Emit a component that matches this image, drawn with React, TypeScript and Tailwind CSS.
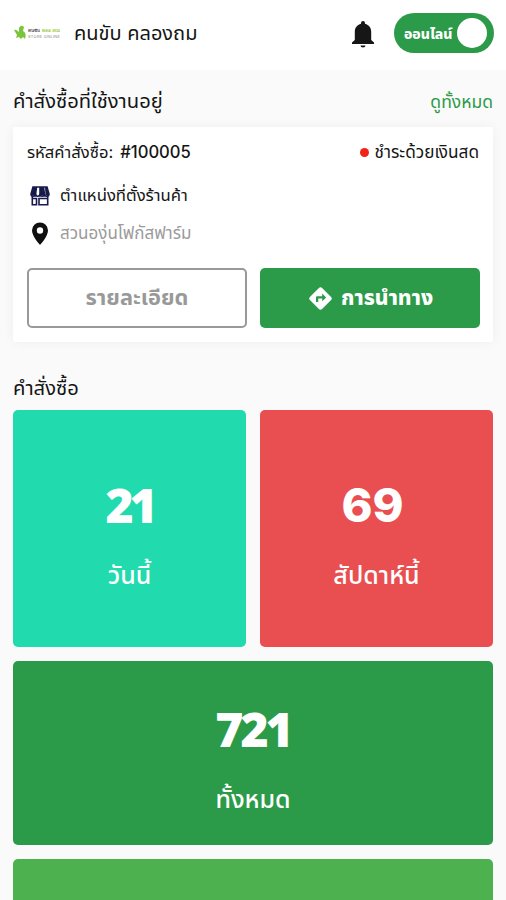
import { MdDirections } from "react-icons/md";

function Logo() {
  return (
    <svg className="h-[18px] w-[50px] shrink-0" viewBox="0 0 50 18">
      <path d="M1 6 Q3 5 6 8 L6 4 Q8 0 11 3 L10 7 Q14 9 12 15 L10 13 L8 15 L6 13 L3 14 L4 11Z" fill="#7cc43c" />
      <text x="15" y="8" fontSize="4.500" fontWeight="700" fontFamily="Noto Sans, sans-serif" fill="#555" textLength="12">คนขับ</text>
      <text x="29" y="8" fontSize="4.500" fontWeight="700" fontFamily="Noto Sans, sans-serif" fill="#9ac83c" textLength="18">คลองถม</text>
      <text x="15" y="14" fontSize="4" fontFamily="Inter, sans-serif" fill="#888" textLength="32">STORE ONLINE</text>
    </svg>
  );
}

function BellIcon() {
  return (
    <svg className="ml-auto mr-[3px] mt-px h-[28px] w-[24px] shrink-0" viewBox="0 0 24 28" fill="#161616">
      <path d="M12 1a2 2 0 0 1 2 2v.8c4 1 6.200 4.200 6.200 8.200v8l2.800 2.600V24H1v-1.400L3.800 20v-8c0-4 2.200-7.200 6.200-8.200V3a2 2 0 0 1 2-2z" />
      <path d="M9.500 25.400h5a2.500 2 0 0 1-5 0z" />
    </svg>
  );
}

function PinIcon() {
  return (
    <svg className="h-[24px] w-[27px] shrink-0" viewBox="0 0 27 24">
      <path fillRule="evenodd" d="M13 .5A8 8 0 0 0 5 8.500C5 14.500 13 23 13 23S21 14.500 21 8.500A8 8 0 0 0 13 .5zM13 5.300a3.200 3.200 0 1 1 0 6.400 3.200 3.200 0 0 1 0-6.400z" fill="#101010" />
    </svg>
  );
}

function StoreIcon() {
  return (
    <svg className="h-5 w-5 shrink-0" viewBox="0 0 20 20" fill="none" stroke="#181a4b" strokeWidth="1.6">
      <path d="M3 1h14l2 7a2.200 2.200 0 0 1-4.500 0 2.200 2.200 0 0 1-4.500 0 2.200 2.200 0 0 1-4.500 0A2.200 2.200 0 0 1 1 8z" />
      <path d="M3 1h3.500L5.500 8v2.200L1 9zM10 1h3.500l1 7-1.500 2-3-1.500zM15 1h2l2 7-1.500 2-2-1z" fill="#181a4b" stroke="none" />
      <path d="M6.500 1 5.500 9M10 1v8M13.500 1l1 8M2.300 10v8.800h4.200V13M17.700 10v8.800H9v-6.300h8.700M2.300 12.500h5" />
    </svg>
  );
}

function Stat({ value, label, box, digits }: { value: string; label: string; box: string; digits: string }) {
  return (
    <div className={`flex flex-col items-center rounded-[5px] text-white ${box}`}>
      <span className={`font-extrabold leading-[56px] ${digits}`}>{value}</span>
      <span className="mt-[19px] text-[25px] font-medium leading-[46px]">{label}</span>
    </div>
  );
}

export default function App() {
  return (
    <div className="h-[900px] w-[506px] overflow-hidden bg-[#fafafa] font-['Inter','Noto_Sans_Thai','Noto_Sans',sans-serif] text-[#151515]">
      <header className="flex h-[70px] items-center bg-white pl-[13px] pr-3 pb-1">
        <Logo />
        <h1 className="ml-[11px] whitespace-nowrap text-[20px]">คนขับ คลองถม</h1>
        <BellIcon />
        <div className="ml-4 flex h-10 w-[100px] items-center justify-between rounded-full bg-[#2b9b49] pl-[10px] pr-[7px]">
          <span className="whitespace-nowrap text-[14px] font-extrabold text-white">ออนไลน์</span>
          <span className="size-[30px] rounded-full bg-white" />
        </div>
      </header>
      <main className="px-[13px]">
        <div className="flex h-[57px] items-center justify-between pt-[5px]">
          <h2 className="whitespace-nowrap text-[20.200px]">คำสั่งซื้อที่ใช้งานอยู่</h2>
          <a className="whitespace-nowrap pt-0.5 text-[17.5px] text-[#2b9b49]">ดูทั้งหมด</a>
        </div>
        <section className="h-[215px] rounded-[2px] bg-white px-[14px] shadow-[0_0_12px_rgba(0,0,0,0.05)]">
          <div className="flex h-[50px] items-center whitespace-nowrap text-[16.6px]">
            <span>รหัสคำสั่งซื้อ:</span>
            <span className="ml-[7px] font-medium">#100005</span>
            <span className="ml-auto size-[9px] rounded-full bg-[#f22218]" />
            <span className="ml-[6px] text-[17.2px]">ชำระด้วยเงินสด</span>
          </div>
          <div className="flex h-[38px] items-center whitespace-nowrap pl-[3px] text-[16.7px]">
            <StoreIcon />
            <span className="ml-[10px]">ตำแหน่งที่ตั้งร้านค้า</span>
          </div>
          <div className="flex h-[38px] items-center whitespace-nowrap text-[17px] text-[#9b9b9b]">
            <PinIcon />
            <span className="ml-[6px]">สวนองุ่นโฟกัสฟาร์ม</span>
          </div>
          <div className="-mr-px mt-[15px] grid grid-cols-2 gap-[13px]">
            <button className="h-[60px] rounded-[5px] border-2 border-[#999] pb-0.5 text-[21.8px] font-bold text-[#999]">รายละเอียด</button>
            <button className="flex h-[60px] items-center justify-center gap-[7px] rounded-[5px] bg-[#2b9b49] text-[21px] font-extrabold text-white">
              <MdDirections className="size-[27px]" />
              <span>การนำทาง</span>
            </button>
          </div>
        </section>
        <h2 className="mt-[27px] flex h-[41px] items-center pb-0.5 text-[20.200px]">คำสั่งซื้อ</h2>
        <div className="grid grid-cols-2 gap-[14px]">
          <Stat value="21" label="วันนี้" box="h-[237px] pt-[67px] bg-[#21daad]" digits="font-['Open_Sans',sans-serif] text-[48px] tracking-[-4px]" />
          <Stat value="69" label="สัปดาห์นี้" box="h-[237px] pt-[67px] bg-[#e94e50]" digits="pr-2 text-[47px]" />
          <Stat value="721" label="ทั้งหมด" box="col-span-2 h-[184px] pt-[40px] bg-[#2b9b49]" digits="font-['Open_Sans',sans-serif] text-[48px] tracking-[-3px]" />
          <div className="col-span-2 h-[184px] rounded-[5px] bg-[#4eb150]" />
        </div>
      </main>
    </div>
  );
}
